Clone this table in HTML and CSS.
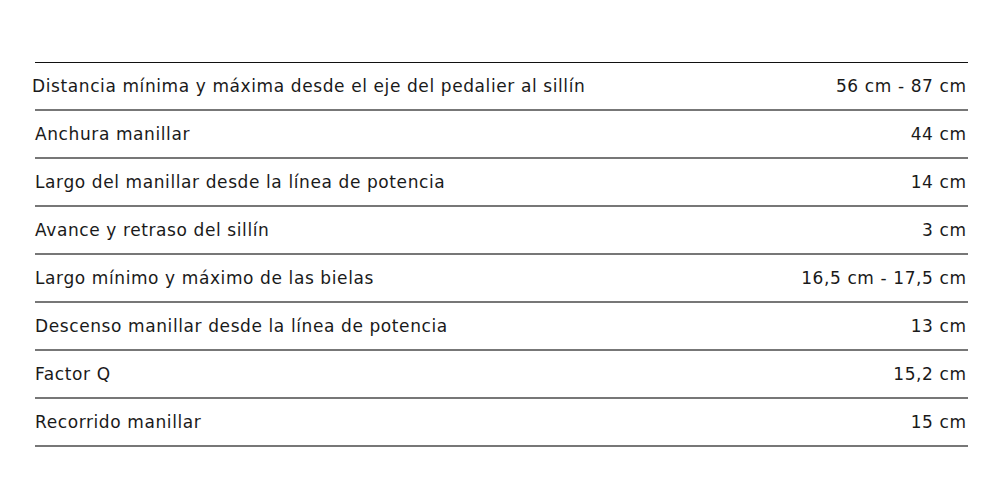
FILE: index.html
```html
<!DOCTYPE html>
<html lang="es">
<head>
<meta charset="utf-8">
<link rel="stylesheet" href="styles.css">
</head>
<body>
<div class="specs">
  <div class="row first"><span class="label">Distancia mínima y máxima desde el eje del pedalier al sillín</span><span class="value">56 cm - 87 cm</span></div>
  <div class="row"><span class="label">Anchura manillar</span><span class="value">44 cm</span></div>
  <div class="row"><span class="label">Largo del manillar desde la línea de potencia</span><span class="value">14 cm</span></div>
  <div class="row"><span class="label">Avance y retraso del sillín</span><span class="value">3 cm</span></div>
  <div class="row"><span class="label">Largo mínimo y máximo de las bielas</span><span class="value">16,5 cm - 17,5 cm</span></div>
  <div class="row"><span class="label">Descenso manillar desde la línea de potencia</span><span class="value">13 cm</span></div>
  <div class="row"><span class="label">Factor Q</span><span class="value">15,2 cm</span></div>
  <div class="row"><span class="label">Recorrido manillar</span><span class="value">15 cm</span></div>
</div>
</body>
</html>
```
FILE: styles.css
```css
html, body {
  margin: 0;
  padding: 0;
  background: #fff;
}
body {
  padding: 62px 32px 0 35px;
  font-family: "DejaVu Sans", "Liberation Sans", sans-serif;
  font-size: 17px;
  letter-spacing: 0.6px;
  color: #1a1a1a;
}
.specs {
  border-top: 1px solid #111;
}
.row {
  display: flex;
  justify-content: space-between;
  align-items: center;
  height: 46px;
  border-bottom: 2px solid #777;
  padding: 0 2px 0 0;
}
.row .value {
  margin-right: -0.6px;
}
.row.first .label {
  margin-left: -3px;
}
```
